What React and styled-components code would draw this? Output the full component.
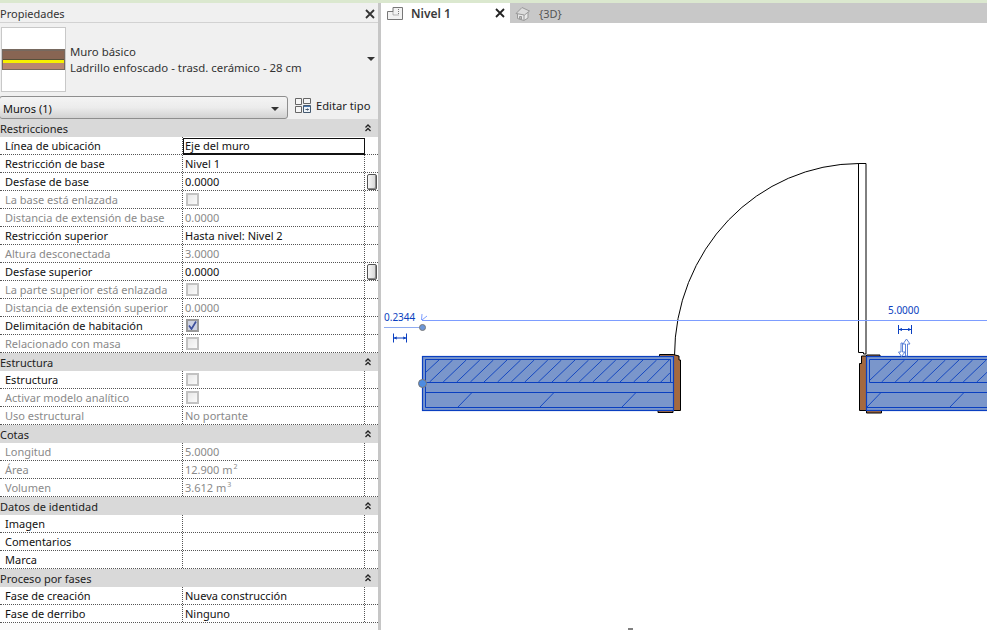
import React from 'react';
import styled, { createGlobalStyle } from 'styled-components';

const Global = createGlobalStyle`
  html, body { margin: 0; padding: 0; height: 100%; overflow: hidden; background: #fff; }
  body { font-family: "Noto Sans", Tahoma, sans-serif; font-size: 11px; color: #111; }
`;

const Shell = styled.div`
  display: flex;
  width: 987px;
  height: 630px;
  border-top: 3px solid #dbe8cf;
  box-sizing: border-box;
`;

const Panel = styled.aside`
  width: 381px;
  flex: none;
  background: #f0f0f0;
  border-right: 3px solid #c6c6c6;
  box-sizing: border-box;
  display: flex;
  flex-direction: column;
`;

const TitleBar = styled.div`
  height: 20px;
  padding: 2px 3px 0 0;
  display: flex;
  align-items: center;
  justify-content: space-between;
  color: #333;
  box-sizing: border-box;
  border-bottom: 1px solid #d2d2d2;
`;

const TypeBox = styled.div`
  height: 71px;
  display: flex;
  align-items: center;
  padding: 1px 3px 0 1px;
  box-sizing: border-box;
  gap: 4px;
`;

const Thumb = styled.div`
  width: 65px;
  height: 65px;
  flex: none;
  background: #fff;
  border: 1px solid #c8c8c8;
  box-sizing: border-box;
  display: flex;
  align-items: center;
`;

const TypeText = styled.div`
  flex: 1;
  margin-top: 2px;
  font-size: 11.4px;
  line-height: 16px;
  color: #333;
  white-space: nowrap;
`;

const SelectRow = styled.div`
  height: 25px;
  display: flex;
  align-items: flex-end;
  gap: 7px;
`;

const Select = styled.div`
  width: 289px;
  height: 23px;
  margin-left: -1px;
  padding: 2px 8px 0 3px;
  box-sizing: border-box;
  display: flex;
  align-items: center;
  justify-content: space-between;
  background: linear-gradient(#f4f4f4, #ececec 50%, #d2d2d2);
  border: 1px solid #8e8e8e;
  border-radius: 3px;
`;

const EditType = styled.div`
  display: flex;
  align-items: center;
  gap: 5px;
  height: 23px;
  margin-bottom: 2px;
  font-size: 11.2px;
  color: #222;
`;

const Arrow = styled.span`
  width: 0;
  height: 0;
  border-left: 4px solid transparent;
  border-right: 4px solid transparent;
  border-top: 4px solid #333;
`;

const Grid = styled.div`
  flex: 1;
  display: flex;
  flex-direction: column;
  background: #fafafa;
`;

const Section = styled.div`
  height: 18px;
  background: #d9d9d9;
  display: flex;
  align-items: center;
  justify-content: space-between;
  padding: 0 7px 0 0;
  color: #222;
  box-sizing: border-box;
`;

const Row = styled.div`
  height: 18px;
  display: grid;
  grid-template-columns: 183px 182px 13px;
  border-bottom: 1px dotted #555;
  box-sizing: border-box;
  background: #fff;
  color: ${p => (p.$off ? '#8a8a8a' : '#111')};
`;

const Label = styled.div`
  padding-left: 5px;
  line-height: 17px;
  white-space: nowrap;
  border-right: 1px dotted #555;
`;

const Value = styled.div`
  padding-left: 2px;
  line-height: 17px;
  white-space: nowrap;
  border-right: 1px dotted #555;
  display: flex;
  align-items: center;
  box-sizing: border-box;
  ${p => p.$active && `
    align-self: start;
    height: 17px;
    line-height: 14px;
    border: 1px solid #111;
    border-bottom-width: 2px;
    margin: 1px 0 -1px 0;
    padding: 0 0 0 1px;
    background: #fff;
    position: relative;
  `}
  sup { font-size: 7px; line-height: 0; margin-top: -5px; margin-left: 1px; }
`;

const Gutter = styled.div`
  display: flex;
  align-items: center;
  justify-content: center;
`;

const Thumbwheel = styled.span`
  width: 10px;
  height: 16px;
  box-sizing: border-box;
  border: 1px solid #555;
  border-radius: 2px;
  box-shadow: inset -1px -1px 0 #8a8a8a;
  background: linear-gradient(90deg, #f8f8f8, #d4d4d4);
`;

const Check = styled.span`
  width: 13px;
  height: 13px;
  box-sizing: border-box;
  margin-left: 1px;
  border: 2px solid ${p => (p.$checked ? '#999' : '#c2c2c2')};
  background: ${p => (p.$checked ? '#cdd2e2' : 'linear-gradient(135deg, #e8e8e8, #fafafa)')};
  display: flex;
  align-items: center;
  justify-content: center;
`;

const View = styled.main`
  flex: 1;
  display: flex;
  flex-direction: column;
  min-width: 0;
`;

const TabBar = styled.div`
  height: 20px;
  background: #c8c8c8;
  display: flex;
  align-items: stretch;
  flex: none;
`;

const Tab = styled.div`
  display: flex;
  align-items: center;
  gap: ${p => (p.$active ? '8px' : '9px')};
  padding-left: ${p => (p.$active ? '6px' : '5px')};
  width: ${p => (p.$active ? '129px' : 'auto')};
  box-sizing: border-box;
  background: ${p => (p.$active ? '#fff' : 'transparent')};
  color: ${p => (p.$active ? '#3a3a3a' : '#555')};
  font-size: ${p => (p.$active ? '12px' : '11px')};
  font-weight: ${p => (p.$active ? 600 : 400)};
`;

const TabClose = styled.svg`
  margin-left: auto;
  margin-right: 5px;
`;

const Canvas = styled.svg`
  flex: 1;
  display: block;
  width: 606px;
`;

const sections = [
  ['Restricciones', [
    { label: 'Línea de ubicación', value: 'Eje del muro', active: true },
    { label: 'Restricción de base', value: 'Nivel 1' },
    { label: 'Desfase de base', value: '0.0000', wheel: true },
    { label: 'La base está enlazada', check: true, off: true },
    { label: 'Distancia de extensión de base', value: '0.0000', off: true },
    { label: 'Restricción superior', value: 'Hasta nivel: Nivel 2' },
    { label: 'Altura desconectada', value: '3.0000', off: true },
    { label: 'Desfase superior', value: '0.0000', wheel: true },
    { label: 'La parte superior está enlazada', check: true, off: true },
    { label: 'Distancia de extensión superior', value: '0.0000', off: true },
    { label: 'Delimitación de habitación', check: true, checked: true },
    { label: 'Relacionado con masa', check: true, off: true },
  ]],
  ['Estructura', [
    { label: 'Estructura', check: true },
    { label: 'Activar modelo analítico', check: true, off: true },
    { label: 'Uso estructural', value: 'No portante', off: true },
  ]],
  ['Cotas', [
    { label: 'Longitud', value: '5.0000', off: true },
    { label: 'Área', value: '12.900 m', sup: '2', off: true },
    { label: 'Volumen', value: '3.612 m', sup: '3', off: true },
  ]],
  ['Datos de identidad', [
    { label: 'Imagen' },
    { label: 'Comentarios' },
    { label: 'Marca' },
  ]],
  ['Proceso por fases', [
    { label: 'Fase de creación', value: 'Nueva construcción' },
    { label: 'Fase de derribo', value: 'Ninguno' },
  ]],
];

const Chevrons = () => (
  <svg width="6" height="8" viewBox="0 0 6 8" fill="none" stroke="#222" strokeWidth="1.3">
    <path d="M.5 3.500 3 1l2.500 2.500M.5 7 3 4.500 5.500 7" />
  </svg>
);

const WallSwatch = () => (
  <svg width="63" height="21" viewBox="0 0 63 21" style={{ display: 'block' }}>
    <rect width="63" height="21" fill="#77695f" />
    <rect x="1" y="2" width="61" height="8" fill="#886553" />
    <rect x="1" y="10" width="61" height="1" fill="#55503a" />
    <rect x="1" y="11" width="61" height="3" fill="#f7f000" />
    <rect x="1" y="14" width="61" height="6" fill="#b98670" />
  </svg>
);

const EditIcon = () => (
  <svg width="16" height="15" viewBox="0 0 16 15" fill="#f6f6f6" stroke="#666">
    <path d="M.5.5h6v6h-6zM.5 8.500h6v6h-6zM8.500.5h7v5h-7z" />
    <path d="M8.500 7.500h7v7h-7z" stroke="#44596f" fill="#eef3f8" />
    <path d="M9 8.500h6" stroke="#4a78b0" />
    <path d="M10.500 11.500h3M12.500 10.500l1 1-1 1" stroke="#44596f" fill="none" />
  </svg>
);

const PlanIcon = () => (
  <svg width="16" height="13" viewBox="0 0 16 13" fill="#f2f2f2" stroke="#777">
    <path d="M.5 4.500H6V.5h9.500v12H.5z" />
    <path d="M6 4.500V8h5.500V.5" fill="none" strokeDasharray="1 1" />
  </svg>
);

const HouseIcon = () => (
  <svg width="15" height="15" viewBox="0 0 15 15" fill="#dcdcdc" stroke="#999">
    <path d="M2.500 7v5.500l6.500 2 4-2.500V6z" fill="#e8e8e8" />
    <path d="M1 7.500 7 1.500l7.500 3.500-5 4z" />
    <path d="M9 9v5" fill="none" />
    <path d="M4.500 10.500h2v3l-2-.6z" fill="#bcbcbc" />
  </svg>
);

const hatchUp = [];
for (let x = 416; x < 666; x += 13.6) hatchUp.push(x);
const hatchRight = [];
for (let x = 868; x < 990; x += 13.6) hatchRight.push(x);

const BLUE = '#0a3fc0';
const GUIDE = '#7d9dff';

const Dim = ({ x, y }) => (
  <path d={`M${x} ${y - 4.500}v9M${x + 13} ${y - 4.500}v9M${x} ${y}h13M${x + 1} ${y}l2.500-1M${x + 1} ${y}l2.500 1M${x + 12} ${y}l-2.500-1M${x + 12} ${y}l-2.500 1`} stroke={BLUE} fill="none" />
);

const App = () => (
  <>
    <Global />
    <Shell>
      <Panel>
        <TitleBar>
          <span>Propiedades</span>
          <svg width="10" height="10" viewBox="0 0 10 10" stroke="#333" strokeWidth="1.8">
            <path d="M1 1l8 8M9 1l-8 8" />
          </svg>
        </TitleBar>
        <TypeBox>
          <Thumb><WallSwatch /></Thumb>
          <TypeText>
            <div>Muro básico</div>
            <div>Ladrillo enfoscado - trasd. cerámico - 28 cm</div>
          </TypeText>
          <Arrow />
        </TypeBox>
        <SelectRow>
          <Select>
            <span>Muros (1)</span>
            <Arrow />
          </Select>
          <EditType>
            <EditIcon />
            <span>Editar tipo</span>
          </EditType>
        </SelectRow>
        <Grid>
          {sections.map(([title, rows]) => (
            <React.Fragment key={title}>
              <Section>
                <span>{title}</span>
                <Chevrons />
              </Section>
              {rows.map(r => (
                <Row key={r.label} $off={r.off}>
                  <Label>{r.label}</Label>
                  <Value $active={r.active}>
                    {r.check ? (
                      <Check $checked={r.checked}>
                        {r.checked && (
                          <svg width="9" height="9" viewBox="0 0 9 9" fill="none" stroke="#3d4f9c" strokeWidth="1.7">
                            <path d="M1 4.500 3.500 8 8 .5" />
                          </svg>
                        )}
                      </Check>
                    ) : (
                      r.value
                    )}
                    {r.sup && <sup>{r.sup}</sup>}
                  </Value>
                  <Gutter>{r.wheel && <Thumbwheel />}</Gutter>
                </Row>
              ))}
            </React.Fragment>
          ))}
        </Grid>
      </Panel>
      <View>
        <TabBar>
          <Tab $active>
            <PlanIcon />
            <span>Nivel 1</span>
            <TabClose width="10" height="10" viewBox="0 0 10 10" stroke="#222" strokeWidth="1.8">
              <path d="M1 1l8 8M9 1l-8 8" />
            </TabClose>
          </Tab>
          <Tab>
            <HouseIcon />
            <span>{'{3D}'}</span>
          </Tab>
        </TabBar>
        <Canvas viewBox="381 23 606 607">
          <path d="M674.500 356A185 192.500 0 0 1 859 163.500" fill="none" stroke="#000" />
          <path d="M858.500 163.500h7.500V354h-2.500v-1.500h-5z" fill="#fff" stroke="#000" />

          <path d="M422 320.500H987" stroke={GUIDE} shapeRendering="crispEdges" />
          <path d="M384 327.500h38" stroke="#8fabf0" shapeRendering="crispEdges" />
          <path d="M421.500 320l.5-6M422 320l5-4" stroke={GUIDE} fill="none" />
          <circle cx="422.500" cy="327.500" r="3" fill="#6c96d8" stroke="#7a7a7a" />
          <text x="384" y="321" fontSize="10" fill={BLUE}>0.2344</text>
          <text x="888" y="314" fontSize="10" fill={BLUE}>5.0000</text>
          <Dim x={393.500} y={338} />
          <Dim x={898.500} y={329.500} />

          <path d="M659.500 356v-1.500h13.500l6 1.500v4h1.500v50.500h-7.500v2h-15v-2" fill="#a4693f" stroke="#000" />
          <rect x="422.500" y="356.500" width="251" height="54" fill="#7a96cb" stroke={BLUE} strokeWidth="1.2" />
          <path d="M425.500 407.500H673M425.500 392.500H673M425.500 359.500H670.500V382.500H673M425.500 382.500H670.500M425.500 359.500V407.500" fill="none" stroke={BLUE} />
          {hatchUp.map(x => (
            <path key={x} d={`M${Math.max(x, 425.500)} ${x < 425.500 ? 382 - (425.500 - x) : 382}L${Math.min(x + 23, 670)} ${x + 23 > 670 ? 359 + (x + 23 - 670) : 360}`} stroke={BLUE} strokeWidth="0.9" />
          ))}
          <path d="M458 407l14-14.500M540 407l14-14.500M622 407l14-14.500" stroke={BLUE} strokeWidth="0.9" />
          <circle cx="422.500" cy="383.500" r="4" fill="#4d8be0" stroke="#777" />

          <path d="M881.500 410.500v2.500h-15v-2.500h-7v-47h2v-7.500h5v-1h13.500v1.500" fill="#a4693f" stroke="#000" />
          <rect x="866.500" y="356.500" width="125" height="54" fill="#7a96cb" stroke={BLUE} strokeWidth="1.2" />
          <path d="M866.500 407.500H990M866.500 392.500H990M869.500 382.500H990M869.500 359.500H990M869.500 359.500V382.500" fill="none" stroke={BLUE} />
          {hatchRight.map(x => (
            <path key={x} d={`M${Math.max(x, 869.500)} ${x < 869.500 ? 382 - (869.500 - x) : 382}L${x + 23} 360`} stroke={BLUE} strokeWidth="0.9" />
          ))}
          <path d="M867 407l14-14.500M950 407l14-14.500" stroke={BLUE} strokeWidth="0.9" />

          <path d="M905.500 356v-12h-2.500l3.500-5 3.500 5h-2.500v12zM902.500 343v9h2.500l-3.500 4.500-3-4.500h2.500v-9z" fill="#fff" stroke="#5e83d8" />
          <path d="M628 629h5" stroke="#000" />
        </Canvas>
      </View>
    </Shell>
  </>
);

export default App;
